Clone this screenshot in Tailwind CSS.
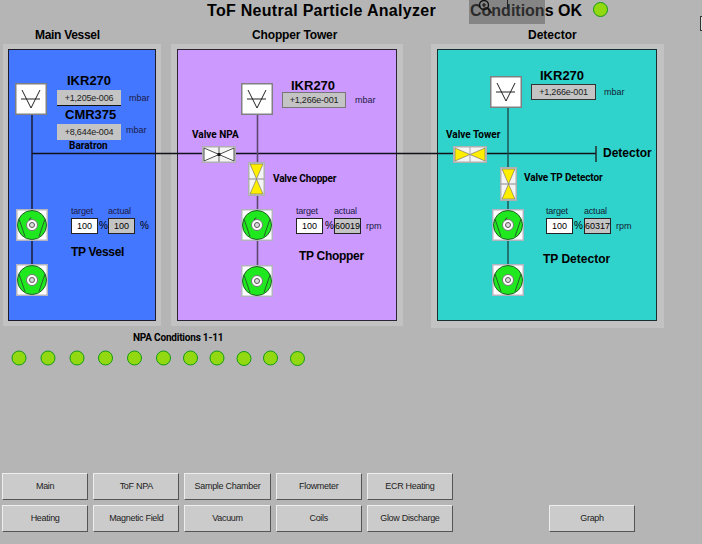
<!DOCTYPE html>
<html lang="en">
    <head>
        <meta charset="UTF-8">
        <meta name="viewport" content="width=device-width, initial-scale=1.0">
        <script src="https://cdn.jsdelivr.net/npm/@tailwindcss/browser@4"></script>
        <title>ToF Neutral Particle Analyzer</title>
    </head>
    <body class="bg-[#b5b5b5]">
        <main class="w-[702px] h-[544px] overflow-hidden bg-[#b5b5b5] text-black font-['Liberation_Sans',Arial,sans-serif]">

            <!-- Synoptic canvas -->
            <section class="relative h-[472px]">

                <!-- Panels -->
                <div class="absolute left-[3px] top-[44px] w-[158px] h-[282px] bg-[#c2c2c2]"></div>
                <div class="absolute left-[8px] top-[49px] w-[148px] h-[272px] bg-[#4477ff] border border-[#1d1d2a]"></div>
                <div class="absolute left-[171px] top-[44px] w-[232px] h-[282px] bg-[#c2c2c2]"></div>
                <div class="absolute left-[177px] top-[49px] w-[220px] h-[272px] bg-[#cc99ff] border border-[#2b2433]"></div>
                <div class="absolute left-[431px] top-[44px] w-[233px] h-[284px] bg-[#c2c2c2]"></div>
                <div class="absolute left-[437px] top-[49px] w-[220px] h-[272px] bg-[#30d2cc] border border-[#17302f]"></div>

                <!-- Pipes and symbols -->
                <svg class="absolute left-0 top-0" width="702" height="472" viewBox="0 0 702 472">
                    <defs>
                        <g id="gauge">
                            <rect x="0.75" y="0.75" width="30.5" height="30.5" fill="#fff" stroke="#808080" stroke-width="1.5"/>
                            <path d="M7 7 L16 25 L25 7 M6 16 H25" fill="none" stroke="#222" stroke-width="1"/>
                        </g>
                        <g id="pump">
                            <rect x="0.75" y="0.75" width="30.5" height="30.5" fill="#fff" stroke="#b4b4c0" stroke-width="1.5"/>
                            <circle cx="16" cy="16" r="14.5" fill="#1fe81f" stroke="#26602a"/>
                            <path d="M3 10 L9 27.5 M29 10 L23 27.5" fill="none" stroke="#26602a" stroke-width="1"/>
                            <circle cx="16" cy="16" r="5.5" fill="#fff" stroke="#777"/>
                            <circle cx="16" cy="16" r="2.5" fill="#ddd" stroke="#555"/>
                        </g>
                        <g id="pump-run">
                            <use href="#pump"/>
                            <path d="M13 11 L15 8.5" stroke="#333" fill="none"/>
                        </g>
                        <g id="valve-white">
                            <rect x="0.75" y="0.75" width="32.5" height="15.5" fill="#f4f4f4" stroke="#b0b0b0" stroke-width="1.5"/>
                            <path d="M17 8.5 L2 2 V15 Z M17 8.5 L32 2 V15 Z" fill="#fff" stroke="#222" stroke-width="0.8"/>
                            <path d="M17 1 V16" stroke="#a8a8a8" stroke-width="2"/>
                            <rect x="15.5" y="7" width="3" height="3" fill="#111"/>
                        </g>
                        <g id="valve-yellow">
                            <rect x="0.75" y="0.75" width="32.5" height="15.5" fill="#f4f4f4" stroke="#b0b0b0" stroke-width="1.5"/>
                            <path d="M17 8.5 L2 2 V15 Z M17 8.5 L32 2 V15 Z" fill="#ffee00" stroke="#666" stroke-width="0.6"/>
                            <path d="M17 1 V16" stroke="#a8a8a8" stroke-width="1"/>
                        </g>
                        <g id="valve-yellow-v">
                            <rect x="0.75" y="0.75" width="15.5" height="32.5" fill="#f4f4f4" stroke="#b0b0b0" stroke-width="1.5"/>
                            <path d="M8.5 17 L2 2 H15 Z M8.5 17 L2 32 H15 Z" fill="#ffee00" stroke="#666" stroke-width="0.6"/>
                            <path d="M1 17 H16" stroke="#8a8a8a" stroke-width="1"/>
                        </g>
                    </defs>

                    <path d="M32 115 V209 M32 241 V264 M32 153.5 H203 M235 153.5 H454 M487 153.5 H596" fill="none" stroke="#111118" stroke-width="1.3"/>
                    <path d="M257.5 115 V163 M257.5 196 V209 M257.5 241 V265" fill="none" stroke="#5a4a70" stroke-width="1.6"/>
                    <path d="M508 108 V167 M508 201 V209 M508 241 V264" fill="none" stroke="#1c4c4c" stroke-width="1.4"/>
                    <path d="M596 146 V162" stroke="#222" stroke-width="1.4"/>

                    <use href="#gauge" x="15" y="83"/>
                    <use href="#gauge" x="241" y="83"/>
                    <use href="#gauge" x="490" y="76"/>

                    <use href="#pump-run" x="16" y="209"/>
                    <use href="#pump" x="16" y="264"/>
                    <use href="#pump-run" x="241" y="209"/>
                    <use href="#pump" x="241" y="265"/>
                    <use href="#pump-run" x="492" y="209"/>
                    <use href="#pump" x="492" y="264"/>

                    <use href="#valve-white" x="202" y="146"/>
                    <use href="#valve-yellow" x="453" y="146"/>
                    <use href="#valve-yellow-v" x="248" y="162"/>
                    <use href="#valve-yellow-v" x="500" y="167"/>

                    <!-- status lamps -->
                    <g fill="#93d911" stroke="#149a14" stroke-width="1">
                        <circle cx="600.5" cy="9.5" r="7"/>
                        <circle cx="19" cy="358" r="7"/>
                        <circle cx="48" cy="358" r="7"/>
                        <circle cx="77" cy="358" r="7"/>
                        <circle cx="105.5" cy="358" r="7"/>
                        <circle cx="134.5" cy="358" r="7"/>
                        <circle cx="163.5" cy="358" r="7"/>
                        <circle cx="190.5" cy="358" r="7"/>
                        <circle cx="217" cy="358" r="7"/>
                        <circle cx="244" cy="358.5" r="7"/>
                        <circle cx="270.5" cy="358" r="7"/>
                        <circle cx="297.5" cy="358.5" r="7"/>
                    </g>
                </svg>

                <!-- Titles -->
                <h1 class="absolute left-[207px] top-[1px] text-[16px] leading-[20px] tracking-[0.29px] font-bold whitespace-nowrap">ToF Neutral Particle Analyzer</h1>
                <p class="absolute left-[470px] top-[1px] text-[16px] leading-[20px] font-bold whitespace-nowrap">Conditions OK</p>
                <h2 class="absolute left-[35px] top-[28px] text-[12px] leading-[14px] tracking-[-0.3px] font-bold whitespace-nowrap">Main Vessel</h2>
                <h2 class="absolute left-[252px] top-[28px] text-[12px] leading-[14px] tracking-[-0.15px] font-bold whitespace-nowrap">Chopper Tower</h2>
                <h2 class="absolute left-[528px] top-[28px] text-[12px] leading-[14px] font-bold whitespace-nowrap">Detector</h2>

                <!-- Main Vessel -->
                <p class="absolute left-[67px] top-[74px] text-[13px] leading-[14px] font-bold">IKR270</p>
                <output class="absolute left-[57px] top-[90px] w-[64px] h-[16px] bg-[#c4c4c4] border-b border-[#111] text-[9px] leading-[16px] tracking-[-0.2px] text-center text-[#222]">+1,205e-006</output>
                <p class="absolute left-[129px] top-[92px] text-[9px] leading-[12px] text-[#1a1a44]">mbar</p>
                <p class="absolute left-[65px] top-[108px] text-[13px] leading-[14px] font-bold">CMR375</p>
                <output class="absolute left-[57px] top-[124px] w-[64px] h-[16px] bg-[#c4c4c4] text-[9px] leading-[17px] tracking-[-0.2px] text-center text-[#222]">+8,644e-004</output>
                <p class="absolute left-[126px] top-[124px] text-[9px] leading-[12px] text-[#1a1a44]">mbar</p>
                <p class="absolute left-[69px] top-[140px] text-[10px] leading-[12px] font-bold font-['Roboto']">Baratron</p>
                <p class="absolute left-[71px] top-[205px] text-[9px] leading-[12px] tracking-[-0.2px] text-[#1a1a44]">target</p>
                <p class="absolute left-[108px] top-[205px] text-[9px] leading-[12px] tracking-[-0.2px] text-[#1a1a44]">actual</p>
                <output class="absolute left-[71px] top-[218px] w-[27px] h-[16px] bg-white border border-[#222] text-[9px] leading-[14px] text-center">100</output>
                <p class="absolute left-[99px] top-[220px] text-[10px] leading-[12px]">%</p>
                <output class="absolute left-[108px] top-[218px] w-[27px] h-[16px] bg-[#c4c4c4] border border-[#222] text-[9px] leading-[14px] text-center">100</output>
                <p class="absolute left-[140px] top-[220px] text-[10px] leading-[12px]">%</p>
                <p class="absolute left-[71px] top-[245px] text-[12px] leading-[14px] tracking-[-0.3px] font-bold whitespace-nowrap">TP Vessel</p>

                <!-- Chopper Tower -->
                <p class="absolute left-[291px] top-[79px] text-[13px] leading-[14px] font-bold">IKR270</p>
                <output class="absolute left-[282px] top-[92px] w-[64px] h-[16px] bg-[#c4c4c4] border border-[#777] text-[9px] leading-[15px] tracking-[-0.2px] text-center text-[#222]">+1,266e-001</output>
                <p class="absolute left-[355px] top-[94px] text-[9px] leading-[12px] text-[#1a1a44]">mbar</p>
                <p class="absolute left-[192px] top-[129px] text-[10px] leading-[12px] font-bold whitespace-nowrap font-['Roboto']">Valve NPA</p>
                <p class="absolute left-[273px] top-[173px] text-[10px] leading-[12px] tracking-[-0.15px] font-bold whitespace-nowrap font-['Roboto']">Valve Chopper</p>
                <p class="absolute left-[296px] top-[205px] text-[9px] leading-[12px] tracking-[-0.2px] text-[#1a1a44]">target</p>
                <p class="absolute left-[334px] top-[205px] text-[9px] leading-[12px] tracking-[-0.2px] text-[#1a1a44]">actual</p>
                <output class="absolute left-[296px] top-[218px] w-[27px] h-[16px] bg-white border border-[#222] text-[9px] leading-[14px] text-center">100</output>
                <p class="absolute left-[325px] top-[220px] text-[10px] leading-[12px]">%</p>
                <output class="absolute left-[334px] top-[218px] w-[27px] h-[16px] bg-[#c4c4c4] border border-[#222] text-[9px] leading-[14px] text-center">60019</output>
                <p class="absolute left-[366px] top-[220px] text-[9px] leading-[12px] text-[#1a1a44]">rpm</p>
                <p class="absolute left-[299px] top-[249px] text-[12px] leading-[14px] tracking-[-0.3px] font-bold whitespace-nowrap">TP Chopper</p>

                <!-- Detector -->
                <p class="absolute left-[540px] top-[69px] text-[13px] leading-[14px] font-bold">IKR270</p>
                <output class="absolute left-[531px] top-[84px] w-[65px] h-[16px] bg-[#c4c4c4] border border-[#333] text-[9px] leading-[15px] tracking-[-0.2px] text-center text-[#222]">+1,266e-001</output>
                <p class="absolute left-[604px] top-[86px] text-[9px] leading-[12px] text-[#123]">mbar</p>
                <p class="absolute left-[446px] top-[129px] text-[10px] leading-[12px] font-bold whitespace-nowrap font-['Roboto']">Valve Tower</p>
                <p class="absolute left-[603px] top-[146px] text-[12px] leading-[14px] font-bold">Detector</p>
                <p class="absolute left-[524px] top-[172px] text-[10px] leading-[12px] tracking-[-0.12px] font-bold whitespace-nowrap font-['Roboto']">Valve TP Detector</p>
                <p class="absolute left-[546px] top-[205px] text-[9px] leading-[12px] tracking-[-0.2px] text-[#123]">target</p>
                <p class="absolute left-[584px] top-[205px] text-[9px] leading-[12px] tracking-[-0.2px] text-[#123]">actual</p>
                <output class="absolute left-[546px] top-[218px] w-[27px] h-[16px] bg-white border border-[#222] text-[9px] leading-[14px] text-center">100</output>
                <p class="absolute left-[574px] top-[220px] text-[10px] leading-[12px]">%</p>
                <output class="absolute left-[584px] top-[218px] w-[27px] h-[16px] bg-[#c4c4c4] border border-[#222] text-[9px] leading-[14px] text-center">60317</output>
                <p class="absolute left-[616px] top-[220px] text-[9px] leading-[12px] text-[#123]">rpm</p>
                <p class="absolute left-[543px] top-[252px] text-[12px] leading-[14px] font-bold whitespace-nowrap">TP Detector</p>

                <p class="absolute left-[133px] top-[332px] text-[10px] leading-[12px] tracking-[-0.2px] font-bold whitespace-nowrap font-['Roboto']">NPA Conditions 1-11</p>

                <!-- Viewer toolbar lying over the title -->
                <div class="absolute left-[469px] top-0 w-[76px] h-[24px] bg-[#555]/50">
                    <svg class="absolute left-[8px] top-0" width="24" height="16" viewBox="0 0 24 16">
                        <circle cx="7" cy="5" r="4.5" fill="none" stroke="#111" stroke-width="1.4"/>
                        <path d="M5 5 H9 M7 3 V7 M10.5 8.5 L15 13" fill="none" stroke="#111" stroke-width="1.2"/>
                    </svg>
                    <div class="absolute left-[38px] top-0 w-px h-[8px] bg-[#222]"></div>
                </div>
                <div class="absolute left-[700px] top-[16px] w-[4px] h-[15px] border border-[#333] bg-[#ddd]"></div>
            </section>

            <!-- Navigation buttons -->
            <nav class="flex gap-[96px] pl-[2px] pt-px text-[9px] tracking-[-0.3px] text-[#222]">
                <div class="grid grid-cols-5 gap-x-[5px] gap-y-[5px] w-[451px]">
                    <button class="h-[27px] bg-[#cbcbcb] border border-t-[#eee] border-l-[#eee] border-r-[#555] border-b-[#555]">Main</button>
                    <button class="h-[27px] bg-[#cbcbcb] border border-t-[#eee] border-l-[#eee] border-r-[#555] border-b-[#555]">ToF NPA</button>
                    <button class="h-[27px] bg-[#cbcbcb] border border-t-[#eee] border-l-[#eee] border-r-[#555] border-b-[#555]">Sample Chamber</button>
                    <button class="h-[27px] bg-[#cbcbcb] border border-t-[#eee] border-l-[#eee] border-r-[#555] border-b-[#555]">Flowmeter</button>
                    <button class="h-[27px] bg-[#cbcbcb] border border-t-[#eee] border-l-[#eee] border-r-[#555] border-b-[#555]">ECR Heating</button>
                    <button class="h-[27px] bg-[#cbcbcb] border border-t-[#eee] border-l-[#eee] border-r-[#555] border-b-[#555]">Heating</button>
                    <button class="h-[27px] bg-[#cbcbcb] border border-t-[#eee] border-l-[#eee] border-r-[#555] border-b-[#555]">Magnetic Field</button>
                    <button class="h-[27px] bg-[#cbcbcb] border border-t-[#eee] border-l-[#eee] border-r-[#555] border-b-[#555]">Vacuum</button>
                    <button class="h-[27px] bg-[#cbcbcb] border border-t-[#eee] border-l-[#eee] border-r-[#555] border-b-[#555]">Coils</button>
                    <button class="h-[27px] bg-[#cbcbcb] border border-t-[#eee] border-l-[#eee] border-r-[#555] border-b-[#555]">Glow Discharge</button>
                </div>
                <button class="self-end w-[86px] h-[27px] bg-[#cbcbcb] border border-t-[#eee] border-l-[#eee] border-r-[#555] border-b-[#555]">Graph</button>
            </nav>
        </main>
    </body>
</html>
